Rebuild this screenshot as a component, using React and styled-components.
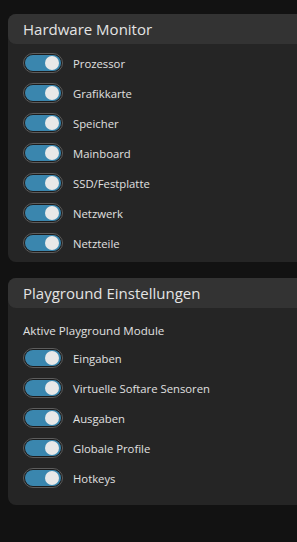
import React from "react";
import styled, { createGlobalStyle } from "styled-components";

const GlobalStyle = createGlobalStyle`
  html, body {
    margin: 0;
    padding: 0;
    background: #121212;
    overflow: hidden;
  }
  body {
    font-family: "Open Sans", "Noto Sans", sans-serif;
    color: #e2e2e2;
  }
`;

const Page = styled.div`
  display: flex;
  flex-direction: column;
  gap: 16px;
  padding: 14px 0 0 8px;
  width: 310px;
  height: 542px;
  box-sizing: border-box;
`;

const Panel = styled.section`
  background: #252525;
  border-radius: 8px;
  padding-bottom: ${(p) => p.$bottom || 4}px;
`;

const Header = styled.div`
  background: #333333;
  border-radius: 8px;
  height: 30px;
  display: flex;
  align-items: center;
  padding-left: 15px;
  font-size: 15px;
  color: #e4e4e4;
`;

const Body = styled.div`
  display: flex;
  flex-direction: column;
  padding: 4px 0 0 15px;
`;

const Label = styled.div`
  height: 24px;
  margin: 6px 0 1px;
  display: flex;
  align-items: center;
  font-size: 11.6px;
  color: #e0e0e0;
`;

const Row = styled.div`
  height: 30px;
  display: flex;
  align-items: center;
  gap: 10px;
  font-size: 11.3px;
  color: #e0e0e0;
`;

const Toggle = styled.span`
  position: relative;
  width: 40px;
  height: 20px;
  box-sizing: border-box;
  border-radius: 10px;
  border: 1px solid #5c5c5c;
  background: #1c1c1c;
  display: inline-flex;
  align-items: center;
  justify-content: ${(p) => (p.$on ? "flex-end" : "flex-start")};
  flex-shrink: 0;

  &::before {
    content: "";
    position: absolute;
    inset: 1px;
    border-radius: 9px;
    background: ${(p) => (p.$on ? "#3a86ae" : "#444")};
  }
`;

const Knob = styled.span`
  position: relative;
  width: 14px;
  height: 14px;
  margin: 0 3px;
  border-radius: 50%;
  background: #e8e8e8;
`;

const hardware = [
  "Prozessor",
  "Grafikkarte",
  "Speicher",
  "Mainboard",
  "SSD/Festplatte",
  "Netzwerk",
  "Netzteile",
];

const modules = [
  "Eingaben",
  "Virtuelle Softare Sensoren",
  "Ausgaben",
  "Globale Profile",
  "Hotkeys",
];

function Switch({ label, on = true }) {
  return (
    <Row>
      <Toggle $on={on}>
        <Knob />
      </Toggle>
      {label}
    </Row>
  );
}

export default function App() {
  return (
    <>
      <GlobalStyle />
      <Page>
        <Panel>
          <Header>Hardware Monitor</Header>
          <Body>
            {hardware.map((h) => (
              <Switch key={h} label={h} />
            ))}
          </Body>
        </Panel>
        <Panel $bottom={12}>
          <Header>Playground Einstellungen</Header>
          <Body>
            <Label>Aktive Playground Module</Label>
            {modules.map((m) => (
              <Switch key={m} label={m} />
            ))}
          </Body>
        </Panel>
      </Page>
    </>
  );
}
